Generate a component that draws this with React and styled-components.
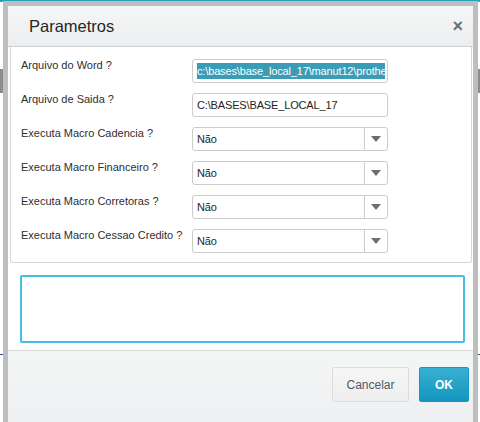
import styled, { createGlobalStyle } from "styled-components";

const GlobalStyle = createGlobalStyle`
  html, body {
    margin: 0;
    padding: 0;
    background: #ffffff;
    font-family: "Liberation Sans", Arial, sans-serif;
  }
  #root {
    height: 422px;
    overflow: hidden;
  }
`;

const fields = [
  { label: "Arquivo do Word ?", type: "text", value: "c:\\bases\\base_local_17\\manut12\\prothe", selected: true },
  { label: "Arquivo de Saida ?", type: "text", value: "C:\\BASES\\BASE_LOCAL_17" },
  { label: "Executa Macro Cadencia ?", type: "select", value: "Não" },
  { label: "Executa Macro Financeiro ?", type: "select", value: "Não" },
  { label: "Executa Macro Corretoras ?", type: "select", value: "Não" },
  { label: "Executa Macro Cessao Credito ?", type: "select", value: "Não" },
];

export default function App() {
  return (
    <>
      <GlobalStyle />
      <Page>
        <TopBar />
        <PageBand $top={67} $color="#8c8c8c" $height={24} />
        <PageBand $top={261} $color="#2c4a7a" $height={1} />
      </Page>
      <Modal>
        <Header>
          <Title>Parametros</Title>
          <Close>×</Close>
        </Header>
        <Body>
          <FormPanel>
            {fields.map((f) => (
              <Row key={f.label}>
                <Label>{f.label}</Label>
                {f.type === "text" ? (
                  <TextField>
                    {f.selected ? <Selected>{f.value}</Selected> : f.value}
                  </TextField>
                ) : (
                  <SelectField>
                    <SelectValue>{f.value}</SelectValue>
                    <Arrow>
                      <svg width="10" height="6" viewBox="0 0 10 6">
                        <path d="M0 0 L10 0 L5 6 Z" fill="#6b6e73" />
                      </svg>
                    </Arrow>
                  </SelectField>
                )}
              </Row>
            ))}
          </FormPanel>
          <Memo />
        </Body>
        <Footer>
          <CancelButton>Cancelar</CancelButton>
          <OkButton>OK</OkButton>
        </Footer>
      </Modal>
    </>
  );
}

const Page = styled.div`
  display: flex;
  flex-direction: column;
`;

const TopBar = styled.div`
  height: 2px;
  background: #2a9fc0;
`;

const PageBand = styled.div`
  margin-top: ${(p) => p.$top}px;
  height: ${(p) => p.$height}px;
  background: ${(p) => p.$color};
`;

const Modal = styled.div`
  position: absolute;
  top: 1px;
  left: 3px;
  width: 475px;
  box-sizing: border-box;
  border: 5px solid #bebebe;
  background: #ffffff;
  display: flex;
  flex-direction: column;
`;

const Header = styled.div`
  height: 40px;
  border-bottom: 1px solid #cdcfd1;
  background: linear-gradient(#f5f6f6, #eceeef);
  display: flex;
  align-items: center;
  justify-content: space-between;
  padding: 0 10px 0 21px;
`;

const Title = styled.div`
  font-size: 16.5px;
  color: #262626;
  padding-top: 1px;
`;

const Close = styled.div`
  font-size: 18px;
  font-weight: bold;
  color: #6b6f76;
  line-height: 1;
  margin-top: -1px;
`;

const Body = styled.div`
  display: flex;
  flex-direction: column;
`;

const FormPanel = styled.div`
  margin: 0 1px 0 2px;
  border: 1px solid #d6d6d6;
  border-top: none;
  border-radius: 0 0 3px 3px;
  padding: 12px 0 9px 10px;
  display: flex;
  flex-direction: column;
  gap: 10px;
`;

const Row = styled.div`
  display: grid;
  grid-template-columns: 171px 196px;
  align-items: start;
`;

const Label = styled.div`
  font-size: 11px;
  color: #2e2e2e;
  line-height: 13px;
`;

const fieldBox = `
  height: 24px;
  box-sizing: border-box;
  border: 1px solid #cccccc;
  border-radius: 3px;
  background: #ffffff;
  font-size: 11px;
  letter-spacing: -0.15px;
  color: #1e1e1e;
  display: flex;
  align-items: center;
  overflow: hidden;
  white-space: nowrap;
`;

const TextField = styled.div`
  ${fieldBox}
  padding: 0 2px 0 4px;
`;

const Selected = styled.span`
  display: block;
  flex: 1;
  overflow: hidden;
  background: #3a9db5;
  color: #ffffff;
  line-height: 16px;
`;

const SelectField = styled.div`
  ${fieldBox}
`;

const SelectValue = styled.span`
  flex: 1;
  padding-left: 4px;
`;

const Arrow = styled.span`
  width: 22px;
  height: 100%;
  border-left: 1px solid #cccccc;
  display: flex;
  align-items: center;
  justify-content: center;
`;

const Memo = styled.div`
  margin: 12px 8px 7px 12px;
  height: 64px;
  border: 2px solid #46bfe4;
  border-radius: 2px;
`;

const Footer = styled.div`
  height: 67px;
  border-top: 1px solid #d6d6d6;
  background: linear-gradient(#f4f5f5, #eeeff1);
  display: flex;
  justify-content: flex-end;
  align-items: flex-start;
  gap: 10px;
  padding: 16px 4px 0 0;
`;

const buttonBase = `
  height: 35px;
  box-sizing: border-box;
  border-radius: 2px;
  font-family: "Liberation Sans", Arial, sans-serif;
  font-size: 12px;
  display: flex;
  align-items: center;
  justify-content: center;
`;

const CancelButton = styled.div`
  ${buttonBase}
  width: 77px;
  border: 1px solid #dcdcdc;
  background: linear-gradient(#f6f6f6, #eeeeee);
  color: #4b5a6b;
`;

const OkButton = styled.div`
  ${buttonBase}
  width: 50px;
  border: 1px solid #1598bf;
  background: linear-gradient(#39b0d2, #1296bf);
  color: #ffffff;
  font-weight: bold;
`;
